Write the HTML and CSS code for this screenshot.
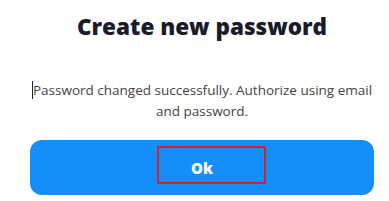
FILE: index.html
```html
<!DOCTYPE html>
<html lang="en">
<head>
    <meta charset="UTF-8">
    <title>Create new password</title>
    <link rel="stylesheet" href="styles.css">
</head>
<body>

<div class="dialog">
    <h1 class="dialog-title">Create new password</h1>
    <p class="dialog-text"><span class="caret"></span>Password changed successfully. Authorize using email and password.</p>
    <button class="ok-btn">Ok<span class="highlight"></span></button>
</div>

</body>
</html>
```

FILE: styles.css
```css
body {
    margin: 0;
    background: #ffffff;
    font-family: 'Open Sans', 'Noto Sans', sans-serif;
}

.dialog {
    width: 389px;
    padding: 0 15px 0 30px;
    box-sizing: border-box;
    display: flex;
    flex-direction: column;
    align-items: center;
}

.dialog-title {
    margin: 12px 0 0;
    font-size: 22.5px;
    line-height: 30px;
    font-weight: 800;
    color: #1b1c2a;
    text-align: center;
}

.dialog-text {
    margin: 38px 0 0;
    font-size: 13.5px;
    line-height: 21px;
    color: #444444;
    text-align: center;
}

.caret {
    display: inline-block;
    width: 1px;
    height: 18px;
    background: #222;
    vertical-align: -4px;
}

.ok-btn {
    position: relative;
    margin-top: 18px;
    width: 344px;
    height: 55px;
    border: none;
    border-radius: 12px;
    background: #138efa;
    color: #ffffff;
    font-family: inherit;
    font-size: 15px;
    font-weight: 800;
    padding: 0;
    cursor: pointer;
}

.highlight {
    position: absolute;
    left: 127px;
    top: 6px;
    width: 105px;
    height: 34px;
    border: 2px solid #d2232f;
}
```
